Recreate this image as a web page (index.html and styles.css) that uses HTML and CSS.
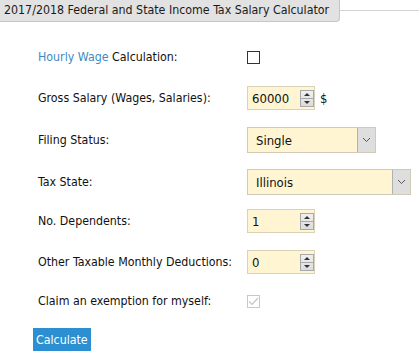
FILE: index.html
```html
<!DOCTYPE html>
<html>
<head>
<meta charset="utf-8">
<link rel="stylesheet" href="styles.css">
</head>
<body>
<div class="header">
  <div class="tab">2017/2018 Federal and State Income Tax Salary Calculator</div>
  <div class="rule"></div>
</div>
<form class="form">
  <div class="row">
    <label class="label"><a class="link" href="#">Hourly Wage</a> Calculation:</label>
    <div class="field"><span class="check"></span></div>
  </div>
  <div class="row">
    <label class="label">Gross Salary (Wages, Salaries):</label>
    <div class="field">
      <div class="spin"><input class="num" value="60000"><span class="arrows"><span class="up"></span><span class="down"></span></span></div>
      <span class="dollar">$</span>
    </div>
  </div>
  <div class="row">
    <label class="label">Filing Status:</label>
    <div class="field"><div class="select short"><span class="val">Single</span><span class="drop"><svg width="9" height="6" viewBox="0 0 9 6"><path d="M1 1 L4.5 4.5 L8 1" fill="none" stroke="#555" stroke-width="1"/></svg></span></div></div>
  </div>
  <div class="row state">
    <label class="label">Tax State:</label>
    <div class="field"><div class="select long"><span class="val">Illinois</span><span class="drop"><svg width="9" height="6" viewBox="0 0 9 6"><path d="M1 1 L4.5 4.5 L8 1" fill="none" stroke="#555" stroke-width="1"/></svg></span></div></div>
  </div>
  <div class="row">
    <label class="label">No. Dependents:</label>
    <div class="field"><div class="spin"><input class="num" value="1"><span class="arrows"><span class="up"></span><span class="down"></span></span></div></div>
  </div>
  <div class="row tight">
    <label class="label">Other Taxable Monthly Deductions:</label>
    <div class="field"><div class="spin"><input class="num" value="0"><span class="arrows"><span class="up"></span><span class="down"></span></span></div></div>
  </div>
  <div class="row tight">
    <label class="label">Claim an exemption for myself:</label>
    <div class="field"><span class="check disabled"><svg width="11" height="9" viewBox="0 0 11 9"><path d="M1 4.5 L4 7.5 L10 1" fill="none" stroke="#c4c4c4" stroke-width="1.2"/></svg></span></div>
  </div>
  <button type="button" class="btn">Calculate</button>
</form>
</body>
</html>
```
FILE: styles.css
```css
body {
  margin: 0;
  font-family: "DejaVu Sans Condensed", "DejaVu Sans", sans-serif;
  font-size: 12.3px;
  color: #111;
  background: #fff;
}
.header {
  display: flex;
  align-items: flex-start;
}
.tab {
  height: 21px;
  line-height: 21px;
  padding: 0 10px 0 4px;
  background: #e2e2e2;
  border-right: 1px solid #c6c6c6;
  border-bottom: 1px solid #c6c6c6;
  border-bottom-right-radius: 4px;
  white-space: nowrap;
  color: #1a1a1a;
}
.rule {
  flex: 1;
  margin-top: 10px;
  border-top: 1px solid #d2d2d2;
}
.form {
  padding: 23px 0 0 33px;
  display: flex;
  flex-direction: column;
}
.row {
  display: grid;
  grid-template-columns: 209px auto;
  align-items: center;
  height: 24px;
  margin-left: 5px;
  margin-bottom: 17px;
}
.row.state {
  margin-top: 1px;
  margin-bottom: 16px;
}
.row.tight {
  margin-bottom: 15px;
}
.link {
  color: #3b8cc4;
  text-decoration: none;
}
.field {
  display: flex;
  align-items: center;
}
.check {
  display: inline-flex;
  align-items: center;
  justify-content: center;
  width: 11px;
  height: 11px;
  border: 1px solid #333;
  background: #fff;
}
.check.disabled {
  border-color: #c8c8c8;
}
.spin {
  display: flex;
  align-items: center;
  width: 66px;
  height: 22px;
  background: #fff5d3;
  border: 1px solid #d9d2b8;
  box-sizing: content-box;
}
.num {
  width: 40px;
  border: 0;
  background: transparent;
  font: inherit;
  font-size: 13px;
  color: #111;
  padding: 0 0 0 4px;
  margin: 0;
  outline: none;
}
.arrows {
  display: flex;
  flex-direction: column;
  margin-left: 8px;
  width: 13px;
  height: 15px;
  border: 1px solid #a9a9a9;
  background: linear-gradient(#f0f0f0, #dcdcdc);
}
.up, .down {
  flex: 1;
  position: relative;
}
.up { border-bottom: 1px solid #a9a9a9; }
.up::after, .down::after {
  content: "";
  position: absolute;
  left: 3px;
  border-left: 3px solid transparent;
  border-right: 3px solid transparent;
}
.up::after { top: 2px; border-bottom: 3px solid #333; }
.down::after { top: 2px; border-top: 3px solid #333; }
.dollar {
  margin-left: 5px;
  font-size: 13px;
}
.select {
  display: flex;
  align-items: stretch;
  height: 24px;
  background: #fff5d3;
  border: 1px solid #d0cbb8;
}
.select.short { width: 127px; }
.select.long { width: 162px; }
.val {
  flex: 1;
  display: flex;
  align-items: center;
  padding-left: 8px;
  font-size: 13px;
}
.drop {
  width: 17px;
  display: flex;
  align-items: center;
  justify-content: center;
  background: #dedede;
  border-left: 1px solid #b0b0b0;
}
.btn {
  align-self: flex-start;
  margin-top: 0;
  height: 23px;
  padding: 0 3px;
  background: #2b8fd1;
  color: #fff;
  border: 0;
  border-radius: 0;
  font: inherit;
  font-size: 12.3px;
}
```
